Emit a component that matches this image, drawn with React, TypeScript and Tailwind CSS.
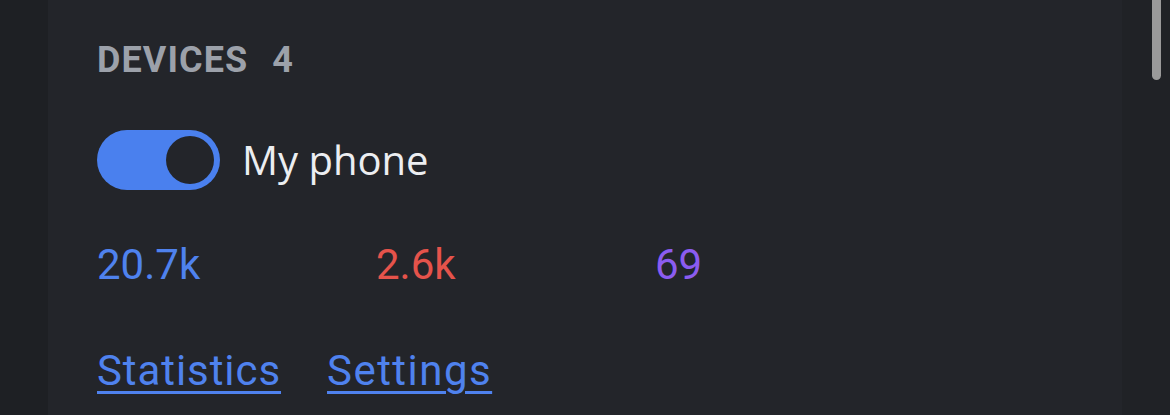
import React from "react";

export default function App() {
  return (
    <div className="flex h-[415px] w-[1170px] overflow-hidden bg-[#1f2125]">
      <div className="w-[48px] shrink-0 bg-[#1e2024]" />
      <div className="flex w-[1074px] shrink-0 flex-col bg-[#23252a] pl-[49px] pt-[38px]">
        <div
          className="flex items-baseline text-[36px] font-bold leading-[44px] tracking-[0.03em] text-[#9ca1aa]"
          style={{ fontFamily: "Roboto, sans-serif" }}
        >
          <span>DEVICES</span>
          <span className="ml-[24px]">4</span>
        </div>
        <div className="mt-[48px] flex items-center">
          <div className="flex h-[60px] w-[123px] items-center justify-end rounded-full bg-[#4a80ee] pr-[6px]">
            <div className="h-[48px] w-[48px] rounded-full bg-[#23252a]" />
          </div>
          <span
            className="ml-[22px] text-[40px] leading-[48px] text-[#eceef1]"
            style={{ fontFamily: "'Open Sans', sans-serif" }}
          >
            My phone
          </span>
        </div>
        <div
          className="mt-[50px] flex text-[42px] leading-[50px]"
          style={{ fontFamily: "Roboto, sans-serif" }}
        >
          <span className="w-[279px] text-[#4f82ee]">20.7k</span>
          <span className="w-[279px] text-[#e5534b]">2.6k</span>
          <span className="w-[279px] text-[#8b5cf0]">69</span>
        </div>
        <div
          className="mt-[56px] flex gap-[46px] text-[42px] leading-[50px] tracking-[0.022em] text-[#4f82ee]"
          style={{ fontFamily: "Roboto, sans-serif" }}
        >
          <a href="#" className="underline decoration-[3px] underline-offset-[6px]">
            Statistics
          </a>
          <a href="#" className="underline decoration-[3px] underline-offset-[6px] tracking-[0.035em]">
            Settings
          </a>
        </div>
      </div>
      <div className="relative flex-1 bg-[#202226]">
        <div className="absolute left-[30px] top-0 h-[80px] w-[9px] rounded-b-full bg-[#9a9a9a]" />
      </div>
    </div>
  );
}
